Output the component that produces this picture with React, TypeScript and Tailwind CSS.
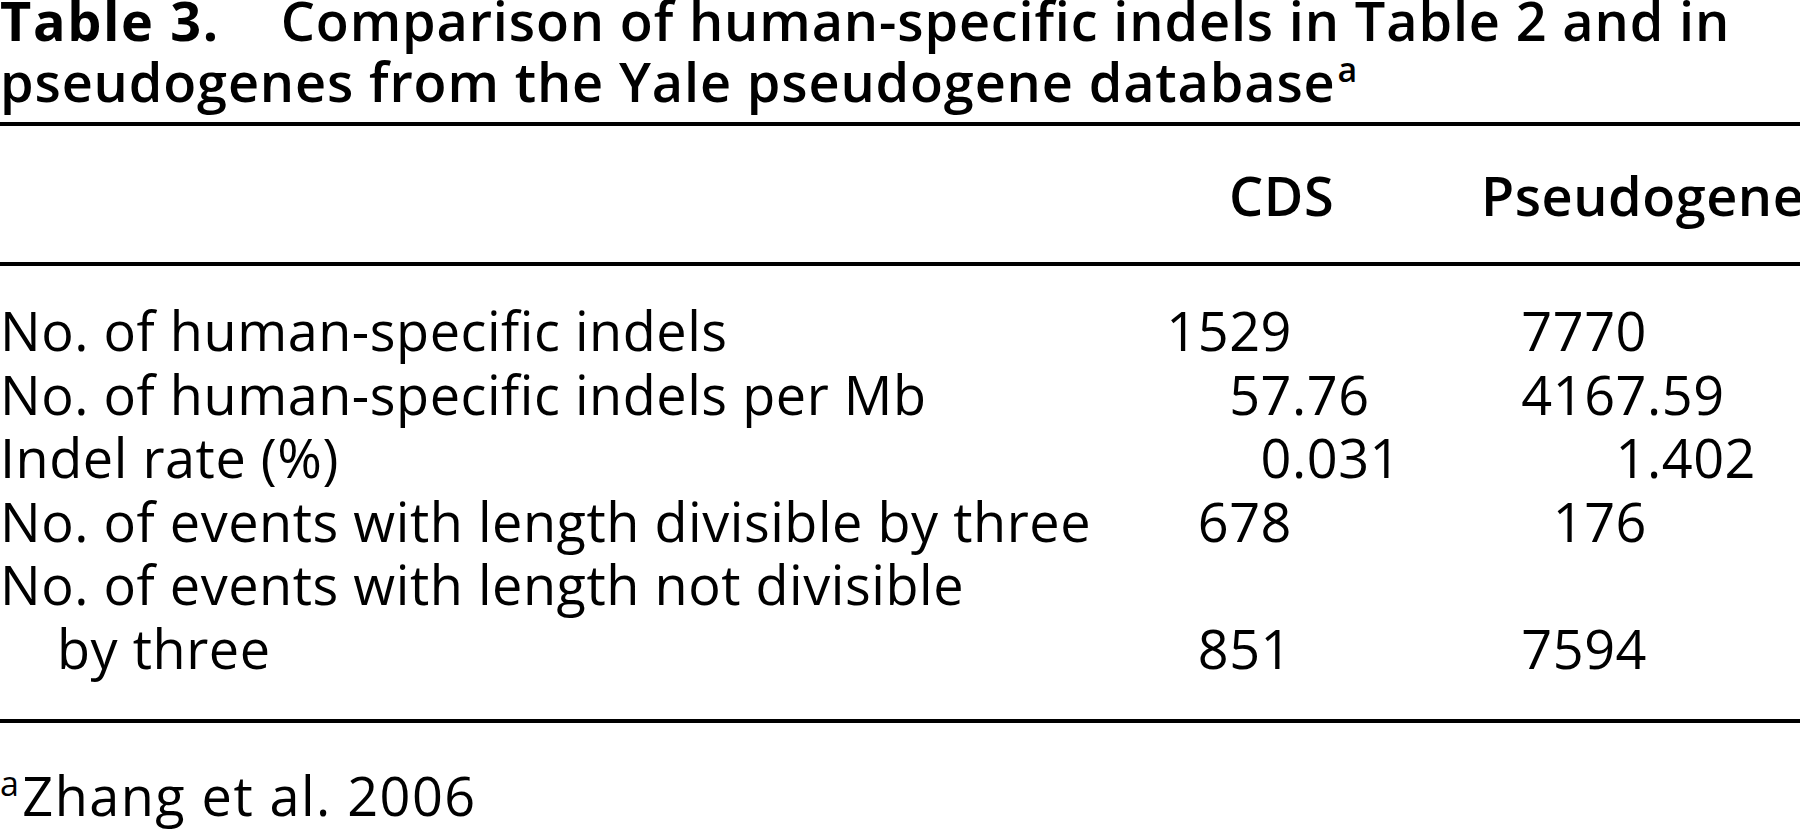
const rows = [
  { label: "No. of human-specific indels", cds: ["1529", ""], pseudo: ["7770", ""] },
  { label: "No. of human-specific indels per Mb", cds: ["57", ".76"], pseudo: ["4167", ".59"] },
  { label: "Indel rate (%)", cds: ["0", ".031"], pseudo: ["1", ".402"] },
  { label: "No. of events with length divisible by three", cds: ["678", ""], pseudo: ["176", ""] },
]

function Rule() {
  return <div className="h-[4px] w-full bg-black" />
}

function Row({ label, cds, pseudo }: { label: string; cds: string[]; pseudo: string[] }) {
  return (
    <div className="grid grid-cols-[1100px_192px_108px_247px_153px] whitespace-nowrap">
      <div>{label}</div>
      <div className="text-right">{cds[0]}</div>
      <div>{cds[1]}</div>
      <div className="text-right">{pseudo[0]}</div>
      <div>{pseudo[1]}</div>
    </div>
  )
}

export default function App() {
  return (
    <div className="h-[831px] w-[1800px] overflow-hidden bg-white text-[54px] leading-[63.6px] tracking-[0.01em] text-black font-['Open_Sans',sans-serif]">
      <div className="font-semibold tracking-[0.016em] whitespace-nowrap">
        <div className="leading-[40px]">
          <span className="font-bold tracking-[0.03em]">Table 3.</span>
          <span className="ml-[61px]">Comparison of human-specific indels in Table 2 and in</span>
        </div>
        <div className="leading-[82px]">
          pseudogenes from the Yale pseudogene database
          <span className="ml-[2px] align-[20px] text-[34px] leading-none">a</span>
        </div>
      </div>

      <Rule />
      <div className="grid h-[136px] grid-cols-[1229px_252px_1fr] pt-[38px] font-semibold whitespace-nowrap">
        <div />
        <div>CDS</div>
        <div>Pseudogene</div>
      </div>
      <Rule />

      <div className="pt-[33px] pb-[38px]">
        {rows.map((r) => (
          <Row key={r.label} {...r} />
        ))}
        <Row label="No. of events with length not divisible" cds={["", ""]} pseudo={["", ""]} />
        <div className="grid grid-cols-[1100px_192px_108px_247px_153px] whitespace-nowrap">
          <div className="pl-[57px]">by three</div>
          <div className="text-right">851</div>
          <div />
          <div className="text-right">7594</div>
          <div />
        </div>
      </div>
      <Rule />

      <div className="mt-[41px] tracking-[0.027em] whitespace-nowrap">
        <span className="mr-[2px] align-[20px] text-[34px] leading-none">a</span>
        Zhang et al. 2006
      </div>
    </div>
  )
}
